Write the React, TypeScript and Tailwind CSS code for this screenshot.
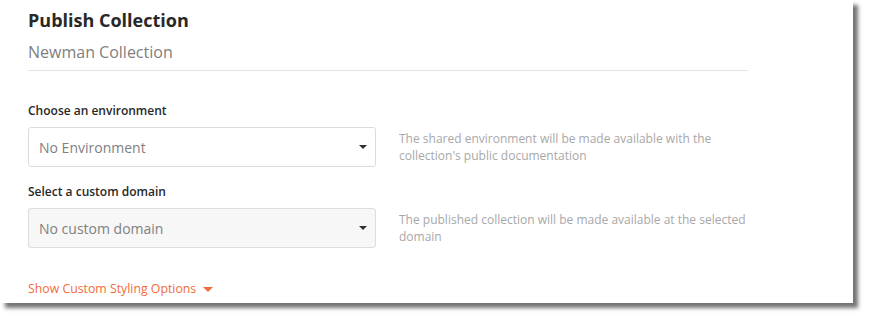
import React from "react";

const Caret = ({ className }: { className: string }) => (
  <span
    className={
      "inline-block h-0 w-0 border-x-[4px] border-t-[4px] border-x-transparent " +
      className
    }
  />
);

interface SelectRowProps {
  label: string;
  value: string;
  help: string;
  disabled?: boolean;
}

const SelectRow: React.FC<SelectRowProps> = ({ label, value, help, disabled }) => {
  return (
    <div className="flex flex-col">
      <label className="text-[12px] leading-[18px] font-semibold text-[#282828]">{label}</label>
      <div className="mt-[7px] flex items-center">
        <div
          className={
            disabled
              ? "flex h-[40px] w-[348px] items-center justify-between rounded-[3px] border border-[#dcdcdc] bg-[#f7f7f7] pl-[10px] pr-[8px]"
              : "flex h-[40px] w-[348px] items-center justify-between rounded-[3px] border border-[#dcdcdc] bg-white pl-[10px] pr-[8px]"
          }
        >
          <span className="text-[14px] text-[#808080]">{value}</span>
          <Caret className="border-t-[#303030]" />
        </div>
        <p className="ml-[23px] w-[352px] text-[12px] leading-[17px] text-[#a8a8a8]">{help}</p>
      </div>
    </div>
  );
};

const App: React.FC = () => {
  return (
    <div className="h-[319px] w-[869px] bg-white" style={{ fontFamily: '"Open Sans", sans-serif' }}>
      <div className="h-[303px] w-[853px] bg-white pl-[28px] pt-[8px] shadow-[5px_5px_4px_rgba(0,0,0,0.55)]">
        <div className="w-[720px] border-b border-[#e4e4e4] pb-[6px]">
          <h1 className="text-[18px] leading-[24px] font-bold text-[#282828]">Publish Collection</h1>
          <h2 className="mt-[8px] text-[16px] leading-[24px] text-[#808080]">Newman Collection</h2>
        </div>

        <div className="mt-[31px] flex flex-col gap-[16px]">
          <SelectRow
            label="Choose an environment"
            value="No Environment"
            help="The shared environment will be made available with the collection's public documentation"
          />
          <SelectRow
            label="Select a custom domain"
            value="No custom domain"
            help="The published collection will be made available at the selected domain"
            disabled
          />
        </div>

        <button className="mt-[32px] flex items-center gap-[7px] text-[12.3px] leading-[18px] text-[#f26b3a]">
          Show Custom Styling Options
          <Caret className="border-t-[#f26b3a] border-x-[5px] border-t-[5px]" />
        </button>
      </div>
    </div>
  );
};

export default App;
